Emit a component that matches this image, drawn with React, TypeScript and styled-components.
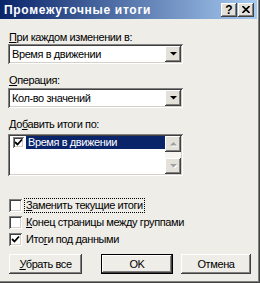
import styled, { createGlobalStyle } from 'styled-components';

const GlobalStyle = createGlobalStyle`
  html, body {
    margin: 0;
    padding: 0;
    background: #efede8;
  }
`;

const FONT = `'Liberation Sans', Arial, sans-serif`;

const Window = styled.div`
  position: relative;
  width: 260px;
  height: 283px;
  box-sizing: border-box;
  background: #efede8;
  box-shadow: inset -1px -1px #404040, inset -2px -2px #808080;
  font-family: ${FONT};
  font-size: 11px;
  letter-spacing: -0.4px;
  color: #000;
  display: flex;
  flex-direction: column;
`;

const TitleBar = styled.div`
  height: 19px;
  margin-right: 3px;
  padding: 0 3px 0 4px;
  background: linear-gradient(to right, #0a246a, #a6caf0);
  display: flex;
  align-items: center;
  color: #fff;
  font-weight: bold;
  font-size: 12px;
  letter-spacing: 0.7px;
`;

const TitleText = styled.span`
  flex: 1;
  white-space: nowrap;
`;

const CaptionButton = styled.div`
  width: 16px;
  height: 14px;
  box-sizing: border-box;
  margin-left: 1px;
  background: #e4e1da;
  box-shadow: inset -1px -1px #404040, inset 1px 1px #fff,
    inset -2px -2px #808080;
  color: #000;
  font-size: 12px;
  font-weight: bold;
  letter-spacing: 0;
  line-height: 14px;
  text-align: center;
  display: flex;
  align-items: center;
  justify-content: center;
`;

const Body = styled.div`
  display: flex;
  flex-direction: column;
  padding-left: 8px;
`;

const Label = styled.div<{ $top: number }>`
  margin-top: ${(p) => p.$top}px;
  height: 13px;
  line-height: 13px;
  padding-left: 1px;
  white-space: nowrap;
`;

const Sunken = styled.div`
  box-sizing: border-box;
  width: 175px;
  background: #fff;
  padding: 2px;
  box-shadow: inset 1px 1px #808080, inset -1px -1px #fff,
    inset 2px 2px #404040, inset -2px -2px #d4d0c8;
`;

const Combo = styled(Sunken)<{ $top: number }>`
  margin-top: ${(p) => p.$top}px;
  height: 20px;
  display: flex;
  align-items: center;
`;

const ComboValue = styled.span`
  flex: 1;
  padding-left: 2px;
  white-space: nowrap;
`;

const ArrowButton = styled.div`
  width: 16px;
  height: 16px;
  box-sizing: border-box;
  background: #e4e1da;
  box-shadow: inset -1px -1px #404040, inset 1px 1px #fff,
    inset -2px -2px #808080;
  display: flex;
  align-items: center;
  justify-content: center;
`;

const ListBox = styled(Sunken)`
  margin-top: 3px;
  height: 42px;
  display: flex;
`;

const ListArea = styled.div`
  flex: 1;
  display: flex;
  flex-direction: column;
`;

const ListRow = styled.div`
  height: 13px;
  display: flex;
  align-items: center;
  padding-left: 3px;
`;

const ListText = styled.span`
  flex: 1;
  margin-left: 2px;
  height: 13px;
  line-height: 13px;
  padding-left: 2px;
  background: #0a246a;
  color: #fff;
  white-space: nowrap;
`;

const ScrollBar = styled.div`
  width: 16px;
  display: flex;
  flex-direction: column;
`;

const ScrollTrack = styled.div`
  flex: 1;
  background: #f6f5f2;
`;

const CheckRow = styled.div<{ $top: number }>`
  margin-top: ${(p) => p.$top}px;
  height: 13px;
  display: flex;
  align-items: center;
  padding-left: 1px;
`;

const Box = styled.div<{ $size: number }>`
  width: ${(p) => p.$size}px;
  height: ${(p) => p.$size}px;
  box-sizing: border-box;
  background: #fff;
  flex-shrink: 0;
  box-shadow: inset 1px 1px #808080, inset -1px -1px #fff,
    inset 2px 2px #404040, inset -2px -2px #d4d0c8;
  display: flex;
  align-items: center;
  justify-content: center;
`;

const CheckLabel = styled.span<{ $focus?: boolean }>`
  margin-left: 3px;
  padding: 0 1px;
  line-height: 13px;
  white-space: nowrap;
  outline: ${(p) => (p.$focus ? '1px dotted #000' : 'none')};
`;

const ButtonRow = styled.div`
  margin-top: 8px;
  display: flex;
  padding-left: 1px;
`;

const Button = styled.div<{ $w: number; $gap: number; $default?: boolean }>`
  width: ${(p) => p.$w}px;
  height: 20px;
  margin-left: ${(p) => p.$gap}px;
  box-sizing: border-box;
  background: #efede8;
  display: flex;
  align-items: center;
  justify-content: center;
  white-space: nowrap;
  box-shadow: ${(p) =>
    p.$default
      ? 'inset 0 0 0 1px #000, inset -2px -2px #404040, inset 2px 2px #fff, inset -3px -3px #808080'
      : 'inset -1px -1px #404040, inset 1px 1px #fff, inset -2px -2px #808080'};
`;

const Tri = ({ up, disabled }: { up?: boolean; disabled?: boolean }) => (
  <svg width="7" height="5" viewBox="0 0 7 5" style={{ overflow: 'visible' }}>
    {disabled && (
      <path
        d={up ? 'M4.5 1 L1 4.5 H8 Z' : 'M1 1 H8 L4.5 4.5 Z'}
        fill="#fff"
      />
    )}
    <path
      d={up ? 'M3.5 0 L0 3.5 H7 Z' : 'M0 0 H7 L3.5 3.5 Z'}
      fill={disabled ? '#a0a0a0' : '#000'}
    />
  </svg>
);

const Check = () => (
  <svg width="9" height="9" viewBox="0 0 9 9">
    <path d="M1 4 L3.5 6.5 L8 1.5" fill="none" stroke="#000" strokeWidth="1.8" />
  </svg>
);

const Checkbox = ({ checked, size = 13 }: { checked?: boolean; size?: number }) => (
  <Box $size={size}>{checked && <Check />}</Box>
);

export default function App() {
  return (
    <>
      <GlobalStyle />
      <Window>
        <TitleBar>
          <TitleText>Промежуточные итоги</TitleText>
          <CaptionButton>?</CaptionButton>
          <CaptionButton>
            <svg width="8" height="7" viewBox="0 0 8 7">
              <path d="M0.5 0 L7.5 7 M7.5 0 L0.5 7" stroke="#000" strokeWidth="1.6" />
            </svg>
          </CaptionButton>
        </TitleBar>
        <Body>
          <Label $top={12}>
            <u>П</u>ри каждом изменении в:
          </Label>
          <Combo $top={0}>
            <ComboValue>Время в движении</ComboValue>
            <ArrowButton>
              <Tri />
            </ArrowButton>
          </Combo>
          <Label $top={10}>
            <u>О</u>перация:
          </Label>
          <Combo $top={1}>
            <ComboValue>Кол-во значений</ComboValue>
            <ArrowButton>
              <Tri />
            </ArrowButton>
          </Combo>
          <Label $top={10}>
            До<u>б</u>авить итоги по:
          </Label>
          <ListBox>
            <ListArea>
              <ListRow>
                <Checkbox checked size={11} />
                <ListText>Время в движении</ListText>
              </ListRow>
            </ListArea>
            <ScrollBar>
              <ArrowButton>
                <Tri up disabled />
              </ArrowButton>
              <ScrollTrack />
              <ArrowButton>
                <Tri disabled />
              </ArrowButton>
            </ScrollBar>
          </ListBox>
          <CheckRow $top={23}>
            <Checkbox />
            <CheckLabel $focus>
              <u>З</u>аменить текущие итоги
            </CheckLabel>
          </CheckRow>
          <CheckRow $top={4}>
            <Checkbox />
            <CheckLabel>
              <u>К</u>онец страницы между группами
            </CheckLabel>
          </CheckRow>
          <CheckRow $top={4}>
            <Checkbox checked />
            <CheckLabel>
              Ито<u>г</u>и под данными
            </CheckLabel>
          </CheckRow>
          <ButtonRow>
            <Button $w={73} $gap={0}>
              <span>
                <u>У</u>брать все
              </span>
            </Button>
            <Button $w={72} $gap={19} $default>
              OK
            </Button>
            <Button $w={70} $gap={8}>
              Отмена
            </Button>
          </ButtonRow>
        </Body>
      </Window>
    </>
  );
}
